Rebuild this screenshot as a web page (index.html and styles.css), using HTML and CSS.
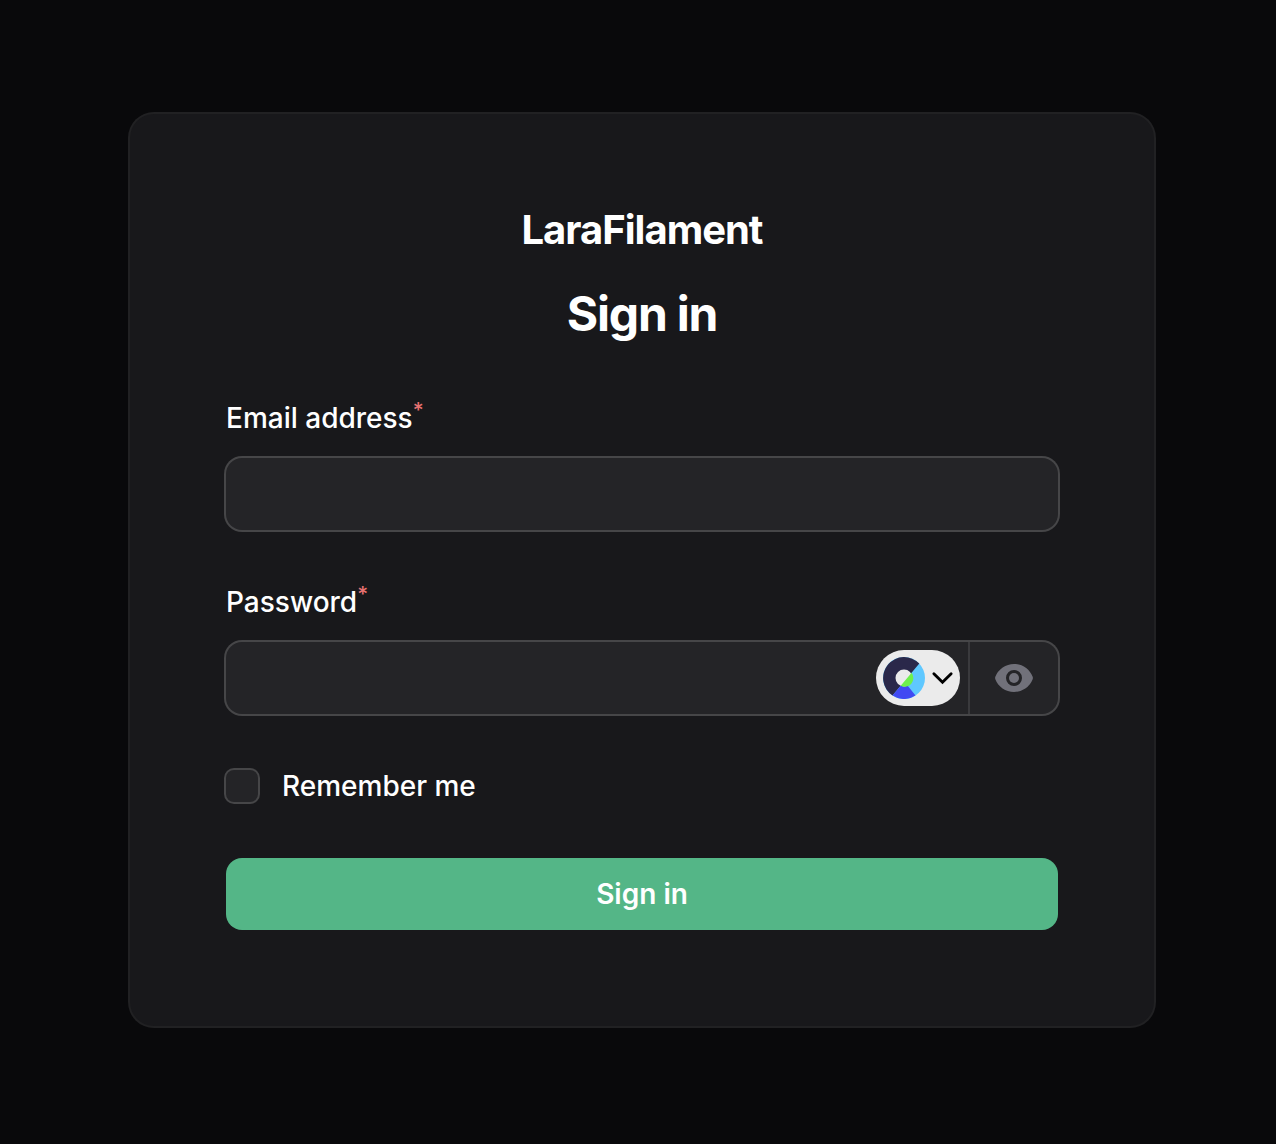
FILE: index.html
```html
<!DOCTYPE html>
<html lang="en">
<head>
  <meta charset="utf-8">
  <meta name="viewport" content="width=device-width, initial-scale=1">
  <title>Sign in - LaraFilament</title>
  <link rel="stylesheet" href="styles.css">
</head>
<body>
  <main class="card">
    <header class="card-header">
      <div class="brand">LaraFilament</div>
      <h1 class="heading">Sign in</h1>
    </header>
    <form class="form">
      <div class="field">
        <label class="label" for="email">Email address<sup class="required">*</sup></label>
        <div class="control">
          <input class="input" id="email" type="email" required>
        </div>
      </div>
      <div class="field">
        <label class="label" for="password">Password<sup class="required">*</sup></label>
        <div class="control">
          <input class="input" id="password" type="password" required>
          <button class="autofill" type="button" aria-label="Password manager">
            <svg class="autofill-logo" viewBox="-21 -21 42 42" aria-hidden="true">
              <circle r="21" fill="#5fc8ff"/>
              <path fill="#2a284a" d="M15.3-14.4A21 21 0 1 0-11.5 17.6Z"/>
              <path fill="#4149f2" d="M11.5 17.6A21 21 0 0 1-11.5 17.6L-3.3 7.8L3.5 7.5Z"/>
              <circle r="8.5" fill="#ebebeb"/>
              <path fill="#6ef04c" d="M7.6-5.2A8.7 8.7 0 0 1-3.3 7.8Z"/>
            </svg>
            <svg class="autofill-chevron" viewBox="0 0 24 24" aria-hidden="true">
              <path d="M3 7l9 9 9-9"/>
            </svg>
          </button>
          <button class="reveal" type="button" aria-label="Show password">
            <svg class="reveal-icon" viewBox="0 0 20 20" aria-hidden="true">
              <path d="M10 12.5a2.5 2.5 0 1 0 0-5 2.5 2.5 0 0 0 0 5Z"/>
              <path fill-rule="evenodd" d="M.664 10.59a1.651 1.651 0 0 1 0-1.186A10.004 10.004 0 0 1 10 3c4.257 0 7.893 2.66 9.336 6.41.147.381.146.804 0 1.186A10.004 10.004 0 0 1 10 17c-4.257 0-7.893-2.66-9.336-6.41ZM14 10a4 4 0 1 1-8 0 4 4 0 0 1 8 0Z" clip-rule="evenodd"/>
            </svg>
          </button>
        </div>
      </div>
      <label class="remember">
        <input class="checkbox" type="checkbox">
        <span>Remember me</span>
      </label>
      <button class="submit" type="submit">Sign in</button>
    </form>
  </main>
</body>
</html>
```
FILE: styles.css
```css
* {
  box-sizing: border-box;
}

body {
  margin: 0;
  min-height: 100vh;
  padding: 32px 0 36px 8px;
  display: flex;
  align-items: center;
  justify-content: center;
  background: #09090b;
  color: #fff;
  font-family: Inter, "Liberation Sans", sans-serif;
  font-size: 28px;
  font-weight: 500;
  line-height: 48px;
  font-optical-sizing: none;
  -webkit-font-smoothing: antialiased;
}

button,
input {
  margin: 0;
  padding: 0;
  border: 0;
  font: inherit;
  color: inherit;
  background: none;
}

.card {
  width: 100%;
  max-width: 1024px;
  padding: 96px;
  border-radius: 24px;
  background: #18181b;
  box-shadow: 0 0 0 2px #212123;
}

.card-header {
  display: flex;
  flex-direction: column;
  align-items: center;
  gap: 32px;
  margin-bottom: 48px;
}

.brand,
.heading {
  margin: 0;
  font-weight: 700;
  letter-spacing: -0.025em;
}

.brand {
  font-size: 40px;
  line-height: 40px;
}

.heading {
  font-size: 48px;
  line-height: 64px;
}

.form {
  display: grid;
  gap: 48px;
}

.field {
  display: grid;
  gap: 16px;
}

.required {
  color: #e87272;
  font-size: 21px;
  line-height: 0;
}

.control {
  display: flex;
  align-items: center;
  height: 72px;
  border-radius: 16px;
  background: #242427;
  box-shadow: 0 0 0 2px #464648;
}

.input {
  flex: 1;
  min-width: 0;
  height: 100%;
  padding: 0 24px;
  outline: none;
}

.autofill {
  display: flex;
  align-items: center;
  gap: 6px;
  height: 56px;
  margin-right: 8px;
  padding: 0 6px 0 7px;
  border-radius: 28px;
  background: #ebebeb;
}

.autofill-logo {
  width: 42px;
  height: 42px;
}

.autofill-chevron {
  width: 23px;
  height: 23px;
  fill: none;
  stroke: #000;
  stroke-width: 3;
  stroke-linecap: round;
}

.reveal {
  display: flex;
  align-items: center;
  height: 100%;
  padding: 0 24px;
  border-left: 2px solid #3a3a3d;
}

.reveal-icon {
  width: 40px;
  height: 40px;
  fill: #71717a;
}

.remember {
  display: flex;
  align-items: center;
  gap: 24px;
}

.checkbox {
  appearance: none;
  width: 32px;
  height: 32px;
  border-radius: 8px;
  background: #242427;
  box-shadow: 0 0 0 2px #464648;
}

.checkbox:checked {
  background: #54b687;
}

.submit {
  height: 72px;
  border-radius: 16px;
  background: #54b687;
  font-weight: 600;
}
```
